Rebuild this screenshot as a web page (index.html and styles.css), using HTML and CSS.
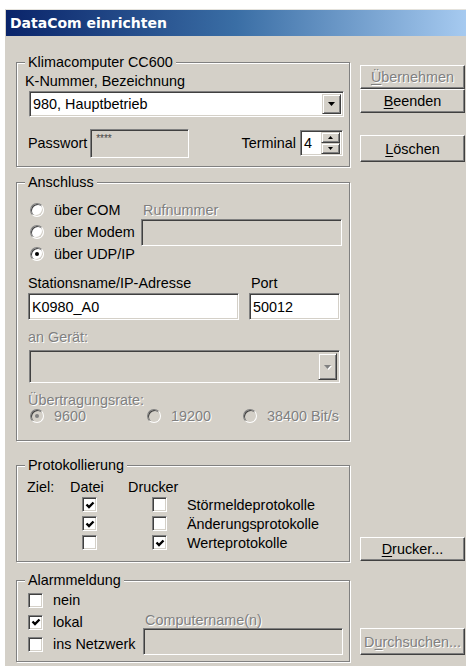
FILE: index.html
```html
<!DOCTYPE html>
<html lang="de">
<head>
<meta charset="utf-8">
<title>DataCom einrichten</title>
<link rel="stylesheet" href="styles.css">
</head>
<body>
<div class="window">
  <div class="titlebar"><span class="title">DataCom einrichten</span></div>
  <div class="dialog">
    <div class="main">
      <fieldset class="group g1">
        <legend>Klimacomputer CC600</legend>
        <div class="caption knum">K-Nummer, Bezeichnung</div>
        <div class="field combo c1">
          <span class="value">980, Hauptbetrieb</span>
          <span class="drop"><svg width="7" height="4" viewBox="0 0 7 4"><path d="M0 0H7L3.5 4Z"/></svg></span>
        </div>
        <div class="pw-row">
          <span class="caption">Passwort</span>
          <span class="field off pw">****</span>
          <span class="caption term">Terminal</span>
          <span class="field spin">
            <span class="value">4</span>
            <span class="spin-btns">
              <span class="sb"><svg width="5" height="3" viewBox="0 0 5 3"><path d="M0 3H5L2.5 0Z"/></svg></span>
              <span class="sb"><svg width="5" height="3" viewBox="0 0 5 3"><path d="M0 0H5L2.5 3Z"/></svg></span>
            </span>
          </span>
        </div>
      </fieldset>

      <fieldset class="group g2">
        <legend>Anschluss</legend>
        <div class="conn">
          <span class="opt"><span class="radio"></span>über COM</span>
          <span class="caption off rufl">Rufnummer</span>
          <span class="opt"><span class="radio"></span>über Modem</span>
          <span class="field off ruf"></span>
          <span class="opt"><span class="radio on"></span>über UDP/IP</span>
        </div>
        <div class="station">
          <div class="col-st">
            <div class="caption">Stationsname/IP-Adresse</div>
            <div class="field txt st">K0980_A0</div>
          </div>
          <div class="col-port">
            <div class="caption portl">Port</div>
            <div class="field txt port">50012</div>
          </div>
        </div>
        <div class="caption off geraet">an Gerät:</div>
        <div class="field off combo c2">
          <span class="value"></span>
          <span class="drop off"><svg width="7" height="4" viewBox="0 0 7 4"><path d="M0 0H7L3.5 4Z"/></svg></span>
        </div>
        <div class="caption off rate">Übertragungsrate:</div>
        <div class="rates">
          <span class="opt off"><span class="radio off on"></span>9600</span>
          <span class="opt off"><span class="radio off"></span>19200</span>
          <span class="opt off"><span class="radio off"></span>38400 Bit/s</span>
        </div>
      </fieldset>

      <fieldset class="group g3">
        <legend>Protokollierung</legend>
        <div class="proto">
          <span class="ziel">Ziel:</span><span>Datei</span><span>Drucker</span><span></span>
          <span></span>
          <span class="cb on dat"><svg viewBox="0 0 12 12"><path d="M2.5 5.5L5 8L9.5 3.5"/></svg></span>
          <span class="cb dru"></span>
          <span>Störmeldeprotokolle</span>
          <span></span>
          <span class="cb on dat"><svg viewBox="0 0 12 12"><path d="M2.5 5.5L5 8L9.5 3.5"/></svg></span>
          <span class="cb dru"></span>
          <span>Änderungsprotokolle</span>
          <span></span>
          <span class="cb dat"></span>
          <span class="cb on dru"><svg viewBox="0 0 12 12"><path d="M2.5 5.5L5 8L9.5 3.5"/></svg></span>
          <span>Werteprotokolle</span>
        </div>
      </fieldset>

      <fieldset class="group g4">
        <legend>Alarmmeldung</legend>
        <div class="alarm">
          <span class="opt a1"><span class="cb"></span>nein</span>
          <span class="opt a2"><span class="cb on"><svg viewBox="0 0 12 12"><path d="M2.5 5.5L5 8L9.5 3.5"/></svg></span>lokal</span>
          <span class="opt a3"><span class="cb"></span>ins Netzwerk</span>
          <div class="compname">
            <span class="caption off">Computername(n)</span>
            <span class="field off cn"></span>
          </div>
        </div>
      </fieldset>
    </div>

    <div class="side">
      <button class="btn off b-ueb"><u>Ü</u>bernehmen</button>
      <button class="btn b-end"><u>B</u>eenden</button>
      <button class="btn b-del"><u>L</u>öschen</button>
      <button class="btn b-druck"><u>D</u>rucker...</button>
      <button class="btn off b-such">D<u>u</u>rchsuchen...</button>
    </div>
  </div>
</div>
</body>
</html>
```

FILE: styles.css
```css
* { box-sizing: border-box; }

html, body {
  margin: 0;
  padding: 0;
}

body {
  background: #fff;
  width: 466px;
  height: 666px;
  overflow: hidden;
  font-family: "Liberation Sans", Arial, sans-serif;
  font-size: 14.4px;
  line-height: 16px;
  color: #000;
}

/* window frame */
.window {
  margin: 9px 0 0 5px;
  height: 657px;
  border-top: 1px solid #e4e2dc;
  border-left: 1px solid #d4d0c8;
  background: #d4d0c8;
}

.titlebar {
  height: 26px;
  display: flex;
  align-items: center;
  padding-left: 4px;
  background: linear-gradient(to right, #0a246a 0%, #3a6ea5 50%, #a6caf0 100%);
}

.title {
  font-family: "DejaVu Sans", sans-serif;
  font-weight: bold;
  font-size: 14px;
  color: #fff;
}

.dialog {
  display: flex;
  gap: 10px;
  padding-left: 10px;
}

.main {
  width: 334px;
  padding-top: 18px;
}

/* etched group boxes */
.group {
  margin: 0;
  min-width: 0;
  padding: 0 6px 0 11px;
  border: 1px solid #808080;
  box-shadow: inset 1px 1px 0 #fff, 1px 1px 0 #fff;
}

.group legend {
  margin-left: -3px;
  padding: 0 3px;
  line-height: 16px;
  background: #d4d0c8;
}

.g1 { padding-top: 3px; padding-bottom: 9px; }
.g2 { margin-top: 7px; padding-top: 9px; padding-bottom: 16px; }
.g3 { margin-top: 16px; padding-top: 6px; padding-bottom: 9px; }
.g4 { margin-top: 10px; padding-top: 1px; padding-bottom: 6px; }

.caption { display: block; white-space: nowrap; }

.off {
  color: #808080;
  text-shadow: 1px 1px 0 #fff;
}

/* sunken edit fields */
.field {
  display: flex;
  align-items: center;
  border: 1px solid;
  border-color: #808080 #fff #fff #808080;
  box-shadow: inset 1px 1px 0 #404040, inset -1px -1px 0 #d4d0c8;
  background: #fff;
  white-space: nowrap;
}

.field.off { background: #d4d0c8; }

.txt { padding-left: 3px; }

.combo .value {
  flex: 1;
  padding-left: 3px;
}

.drop {
  display: flex;
  align-items: center;
  justify-content: center;
  width: 19px;
  height: calc(100% - 4px);
  margin-right: 2px;
  border: 1px solid;
  border-color: #d4d0c8 #404040 #404040 #d4d0c8;
  box-shadow: inset 1px 1px 0 #fff, inset -1px -1px 0 #808080;
  background: #d4d0c8;
}

.drop svg { fill: #000; }
.drop.off svg { fill: #808080; filter: drop-shadow(1px 1px 0 #fff); }

/* Klimacomputer */
.knum { margin-left: -3px; }

.c1 {
  width: 315px;
  height: 26px;
  margin-top: 2px;
  margin-left: 1px;
}

.pw-row {
  display: flex;
  align-items: center;
  height: 28px;
  margin-top: 12px;
}

.pw {
  width: 99px;
  height: 29px;
  margin-left: 3px;
  align-items: flex-start;
  padding: 4px 0 0 5px;
  font-size: 10px;
  line-height: 10px;
  color: #444;
  text-shadow: none;
}

.term { margin-left: auto; }

.spin {
  width: 43px;
  height: 26px;
  margin-left: 4px;
}

.spin .value {
  flex: 1;
  padding-left: 3px;
}

.spin-btns {
  display: flex;
  flex-direction: column;
  width: 19px;
  height: 22px;
  margin-right: 2px;
}

.sb {
  flex: 1;
  display: flex;
  align-items: center;
  justify-content: center;
  border: 1px solid;
  border-color: #d4d0c8 #404040 #404040 #d4d0c8;
  box-shadow: inset 1px 1px 0 #fff, inset -1px -1px 0 #808080;
  background: #d4d0c8;
}

.sb svg { fill: #000; }

/* radio buttons and check boxes */
.opt {
  display: flex;
  align-items: center;
  white-space: nowrap;
}

.radio {
  position: relative;
  flex: none;
  width: 14px;
  height: 14px;
  margin: 0 10px 0 2px;
  border-radius: 50%;
  border: 1px solid;
  border-color: #808080 #fff #fff #808080;
  box-shadow: inset 1px 1px 0 #404040, inset -1px -1px 0 #d4d0c8;
  background: #fff;
}

.radio.on::after {
  content: "";
  position: absolute;
  left: 4px;
  top: 4px;
  width: 4px;
  height: 4px;
  border-radius: 50%;
  background: #000;
}

.radio.off { background: #d4d0c8; }
.radio.off.on::after { background: #808080; }

.cb {
  flex: none;
  display: flex;
  align-items: center;
  justify-content: center;
  width: 15px;
  height: 15px;
  border: 1px solid;
  border-color: #808080 #fff #fff #808080;
  box-shadow: inset 1px 1px 0 #404040, inset -1px -1px 0 #d4d0c8;
  background: #fff;
}

.cb svg {
  width: 12px;
  height: 12px;
  fill: none;
  stroke: #000;
  stroke-width: 2.4;
}

/* Anschluss */
.conn {
  display: grid;
  grid-template-columns: 113px 1fr;
  grid-template-rows: repeat(3, 22px);
  align-items: center;
}

.conn .opt { grid-column: 1; }
.rufl { margin-left: 2px; }

.ruf {
  width: 201px;
  height: 27px;
}

.station {
  display: flex;
  gap: 10px;
  margin-top: 10px;
}

.col-st { width: 211px; }
.col-port { width: 91px; }
.portl { padding-left: 2px; }

.st, .port {
  height: 27px;
  margin-top: 2px;
}

.geraet { margin-top: 9px; }

.c2 {
  width: 311px;
  height: 33px;
  margin-top: 5px;
  margin-left: 1px;
}

.rate { margin-top: 9px; }

.rates {
  display: grid;
  grid-template-columns: 117px 96px auto;
  height: 16px;
}

/* Protokollierung */
.proto {
  display: grid;
  grid-template-columns: 42px 58px 59px auto;
  grid-template-rows: 16px repeat(3, 19px);
  align-items: center;
}

.ziel { margin-left: -1px; }
.proto .dat { margin-left: 12px; }
.proto .dru { margin-left: 24px; }

/* Alarmmeldung */
.alarm {
  display: grid;
  grid-template-columns: 115px 1fr;
  grid-template-rows: repeat(3, 22px);
  align-items: center;
}

.alarm .opt { grid-column: 1; }
.alarm .cb { margin-right: 10px; }
.a1 { grid-row: 1; }
.a2 { grid-row: 2; }
.a3 { grid-row: 3; }

.compname {
  grid-column: 2;
  grid-row: 2 / 4;
  align-self: stretch;
  display: flex;
  flex-direction: column;
  justify-content: flex-end;
}

.compname .caption { padding-left: 2px; }

.cn {
  width: 200px;
  height: 27px;
}

/* command buttons */
.side {
  display: flex;
  flex-direction: column;
  width: 105px;
  padding-top: 29px;
}

.btn {
  display: flex;
  align-items: center;
  justify-content: center;
  width: 105px;
  height: 24px;
  margin: 0;
  padding: 0;
  font: inherit;
  color: #000;
  border: 1px solid;
  border-color: #fff #404040 #404040 #fff;
  box-shadow: inset -1px -1px 0 #808080;
  background: #d4d0c8;
}

.btn.off {
  color: #808080;
  text-shadow: 1px 1px 0 #fff;
}

.btn u { text-underline-offset: 2px; }

.b-del { margin-top: 22px; height: 27px; }
.b-druck { margin-top: 375px; }
.b-such { margin-top: 67px; height: 27px; }
```
